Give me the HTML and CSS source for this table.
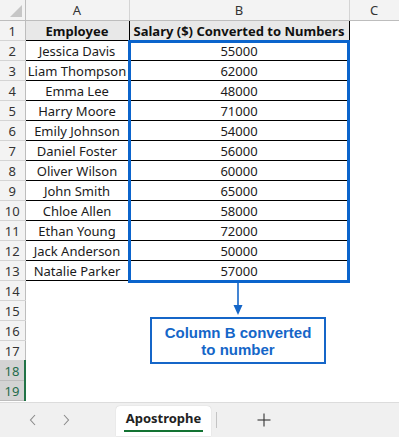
FILE: index.html
```html
<!DOCTYPE html>
<html>
<head>
<meta charset="utf-8">
<link rel="stylesheet" href="styles.css">
</head>
<body>
<div class="sheet">
  <table class="grid">
    <colgroup>
      <col class="c-rh"><col class="c-a"><col class="c-b"><col class="c-c">
    </colgroup>
    <tr class="colhead">
      <th class="corner"><span class="tri"></span></th><th>A</th><th>B</th><th>C</th>
    </tr>
    <tr><th class="rh">1</th><td class="hd bl">Employee</td><td class="hd bl">Salary ($) Converted to Numbers</td><td></td></tr>
    <tr><th class="rh">2</th><td class="bl">Jessica Davis</td><td class="bl">55000</td><td></td></tr>
    <tr><th class="rh">3</th><td class="bl">Liam Thompson</td><td class="bl">62000</td><td></td></tr>
    <tr><th class="rh">4</th><td class="bl">Emma Lee</td><td class="bl">48000</td><td></td></tr>
    <tr><th class="rh">5</th><td class="bl">Harry Moore</td><td class="bl">71000</td><td></td></tr>
    <tr><th class="rh">6</th><td class="bl">Emily Johnson</td><td class="bl">54000</td><td></td></tr>
    <tr><th class="rh">7</th><td class="bl">Daniel Foster</td><td class="bl">56000</td><td></td></tr>
    <tr><th class="rh">8</th><td class="bl">Oliver Wilson</td><td class="bl">60000</td><td></td></tr>
    <tr><th class="rh">9</th><td class="bl">John Smith</td><td class="bl">65000</td><td></td></tr>
    <tr><th class="rh">10</th><td class="bl">Chloe Allen</td><td class="bl">58000</td><td></td></tr>
    <tr><th class="rh">11</th><td class="bl">Ethan Young</td><td class="bl">72000</td><td></td></tr>
    <tr><th class="rh">12</th><td class="bl">Jack Anderson</td><td class="bl">50000</td><td></td></tr>
    <tr><th class="rh">13</th><td class="bl">Natalie Parker</td><td class="bl">57000</td><td></td></tr>
    <tr><th class="rh">14</th><td></td><td></td><td></td></tr>
    <tr><th class="rh">15</th><td></td><td></td><td></td></tr>
    <tr><th class="rh">16</th><td></td><td></td><td></td></tr>
    <tr><th class="rh">17</th><td></td><td></td><td></td></tr>
    <tr><th class="rh sel">18</th><td></td><td></td><td></td></tr>
    <tr><th class="rh sel">19</th><td></td><td></td><td></td></tr>
  </table>
  <div class="selection"></div>
  <div class="callout">
    <svg class="arrow" width="12" height="34" viewBox="0 0 12 34">
      <line x1="6" y1="0" x2="6" y2="24" stroke="#1566c8" stroke-width="1.6"/>
      <polygon points="1.5,22 10.5,22 6,32" fill="#1566c8"/>
    </svg>
    <div class="note">Column B converted<br>to number</div>
  </div>
</div>
<div class="tabbar">
  <span class="nav"><svg width="8" height="12" viewBox="0 0 8 12"><polyline points="6,1 1.5,6 6,11" fill="none" stroke="#8a8a8a" stroke-width="1.1"/></svg></span>
  <span class="nav"><svg width="8" height="12" viewBox="0 0 8 12"><polyline points="2,1 6.5,6 2,11" fill="none" stroke="#8a8a8a" stroke-width="1.1"/></svg></span>
  <div class="tab">Apostrophe</div>
  <span class="sep"></span>
  <span class="plus"><svg width="14" height="14" viewBox="0 0 14 14"><line x1="7" y1="0.5" x2="7" y2="13.5" stroke="#333" stroke-width="1.1"/><line x1="0.5" y1="7" x2="13.5" y2="7" stroke="#333" stroke-width="1.1"/></svg></span>
</div>
</body>
</html>
```
FILE: styles.css
```css
html, body {
  margin: 0;
  padding: 0;
  background: #fff;
  width: 399px;
  height: 437px;
  overflow: hidden;
}
body {
  font-family: "Noto Sans", "Open Sans", sans-serif;
  color: #000;
}
.sheet {
  position: relative;
  height: 402px;
  overflow: hidden;
}
.grid {
  border-collapse: collapse;
  table-layout: fixed;
  width: 399px;
}
.c-rh { width: 25px; }
.c-a { width: 104px; }
.c-b { width: 220px; }
.c-c { width: 50px; }
.grid th, .grid td {
  padding: 0;
  height: 19px;
  font-size: 13px;
  line-height: 18px;
  text-align: center;
  white-space: nowrap;
  overflow: hidden;
}
.colhead th {
  height: 20px;
  background: #f3f3f3;
  border-right: 1px solid #d4d4d4;
  border-bottom: 1px solid #bdbdbd;
  font-weight: normal;
  color: #333;
  font-size: 13px;
}
.colhead th.corner {
  position: relative;
  border-right: 1px solid #bdbdbd;
}
.tri {
  position: absolute;
  right: 3px;
  bottom: 3px;
  width: 0;
  height: 0;
  border-left: 12px solid transparent;
  border-bottom: 12px solid #c6c6c6;
}
.rh {
  background: #f3f3f3;
  border-right: 1px solid #bdbdbd;
  border-bottom: 1px solid #d4d4d4;
  font-weight: normal;
  color: #333;
}
.rh.sel {
  background: #d3d3d3;
  color: #1f6b4a;
  border-right: 2px solid #217346;
  border-bottom: 1px solid #bdbdbd;
}
td.bl {
  border: 1px solid #000;
  color: #1b1b1b;
}
td.hd {
  background: #e8e8e8;
  font-weight: bold;
  color: #111;
}
.selection {
  position: absolute;
  left: 128px;
  top: 40px;
  width: 216px;
  height: 237px;
  border: 3px solid #0b64cc;
  pointer-events: none;
}
.callout {
  position: absolute;
  left: 150px;
  top: 283px;
  width: 176px;
  display: flex;
  flex-direction: column;
  align-items: center;
}
.arrow {
  display: block;
}
.note {
  box-sizing: border-box;
  width: 176px;
  height: 47px;
  border: 2px solid #1566c8;
  background: #fff;
  color: #1566c8;
  font-family: "Liberation Sans", Arial, sans-serif;
  font-weight: bold;
  font-size: 15px;
  line-height: 17px;
  text-align: center;
  padding-top: 5px;
}
.tabbar {
  height: 35px;
  background: #f0f0f0;
  border-top: 1px solid #dcdcdc;
  box-sizing: border-box;
  display: flex;
  align-items: flex-end;
  font-family: "Noto Sans", "Open Sans", sans-serif;
  position: relative;
}
.nav {
  width: 33px;
  height: 34px;
  display: flex;
  align-items: center;
  justify-content: center;
}
.nav:first-child { margin-left: 16px; }
.tab {
  margin-left: 34px;
  width: 95px;
  height: 30px;
  background: #fff;
  border-radius: 4px 4px 0 0;
  box-shadow: 0 0 1px #bbb;
  font-size: 13px;
  font-weight: bold;
  color: #222;
  text-align: center;
  line-height: 25px;
  position: relative;
  margin-bottom: 1px;
}
.tab::after {
  content: "";
  position: absolute;
  left: 8px;
  right: 8px;
  bottom: 4px;
  height: 2px;
  background: #137333;
}
.sep {
  width: 1px;
  height: 16px;
  background: #c4c4c4;
  margin: 0 0 9px 5px;
}
.plus {
  margin-left: 40px;
  height: 34px;
  display: flex;
  align-items: center;
}
```
